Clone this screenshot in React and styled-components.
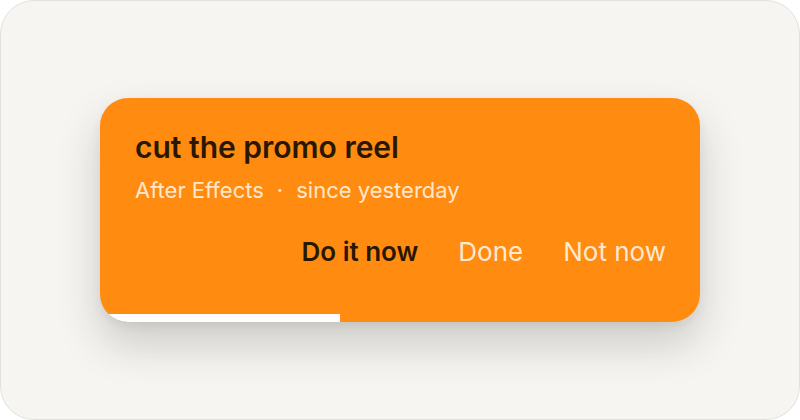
import styled, { createGlobalStyle } from "styled-components";

const GlobalStyle = createGlobalStyle`
  html, body { margin: 0; padding: 0; background: #ffffff; }
  body { font-family: Inter, "Noto Sans", sans-serif; }
`;

const Frame = styled.div`
  box-sizing: border-box;
  width: 800px;
  height: 420px;
  background: #f6f5f2;
  border: 1px solid #e2e1dd;
  border-radius: 34px;
  display: flex;
  align-items: center;
  justify-content: center;
`;

const Card = styled.div`
  position: relative;
  box-sizing: border-box;
  width: 600px;
  height: 224px;
  padding: 31px 34px 0 35px;
  background: #ff8c10;
  border-radius: 28px;
  overflow: hidden;
  box-shadow: 0 22px 44px rgba(40, 35, 25, 0.2), 0 4px 10px rgba(40, 35, 25, 0.06);
  display: flex;
  flex-direction: column;
`;

const Title = styled.h2`
  margin: 0;
  font-size: 30px;
  font-weight: 600;
  line-height: 36px;
  color: #2a1703;
`;

const Meta = styled.div`
  margin-top: 11px;
  font-size: 22px;
  line-height: 28px;
  color: rgba(255, 244, 228, 0.9);
  display: flex;
  gap: 13px;
`;

const Actions = styled.div`
  margin-top: 32px;
  display: flex;
  justify-content: flex-end;
  gap: 40px;
`;

const Action = styled.button`
  border: none;
  background: none;
  padding: 0;
  font-family: inherit;
  font-size: 26px;
  line-height: 32px;
  font-weight: ${(p) => (p.$primary ? 600 : 400)};
  color: ${(p) => (p.$primary ? "#2a1703" : "rgba(255, 244, 228, 0.92)")};
  cursor: pointer;
`;

const Progress = styled.div`
  position: absolute;
  left: 0;
  bottom: 0;
  height: 8px;
  background: #ffffff;
`;

export default function App() {
  const progress = 0.4;
  return (
    <>
      <GlobalStyle />
      <Frame>
        <Card>
          <Title>cut the promo reel</Title>
          <Meta>
            <span>After Effects</span>
            <span>·</span>
            <span>since yesterday</span>
          </Meta>
          <Actions>
            <Action $primary>Do it now</Action>
            <Action>Done</Action>
            <Action>Not now</Action>
          </Actions>
          <Progress style={{ width: `${progress * 100}%` }} />
        </Card>
      </Frame>
    </>
  );
}
